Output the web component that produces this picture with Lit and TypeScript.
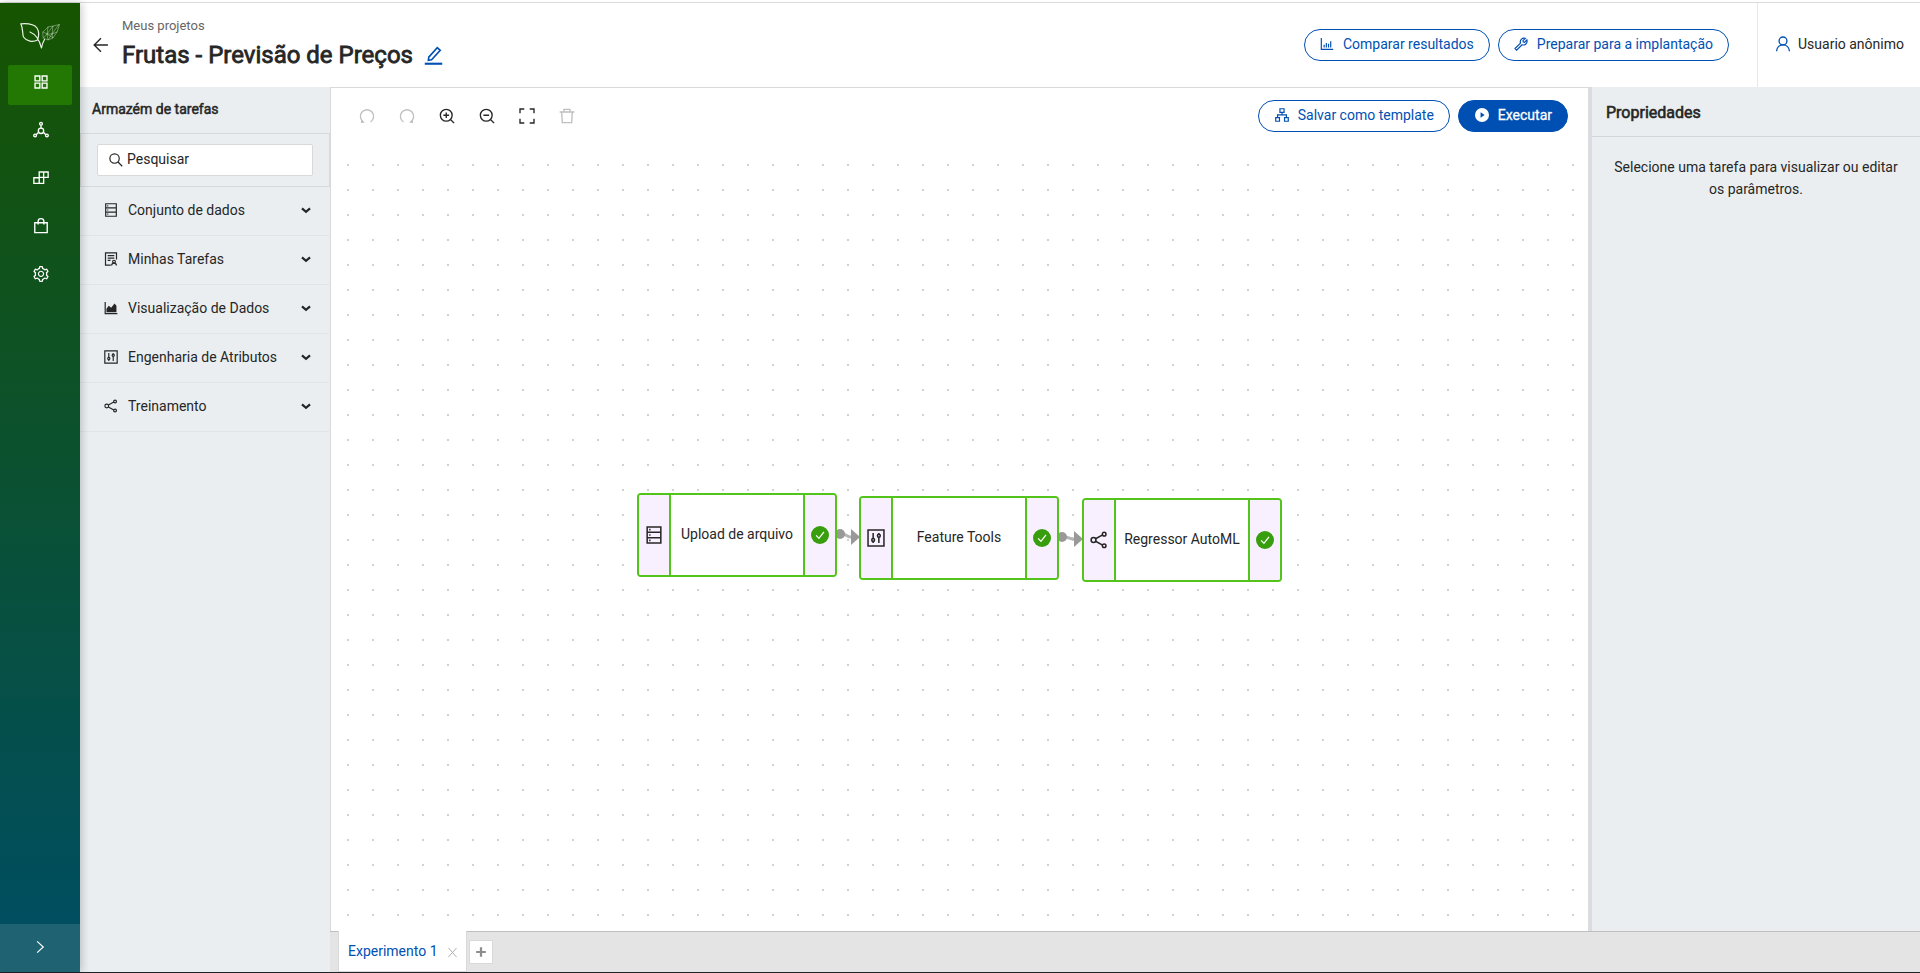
import { LitElement, html, css, svg, nothing, type TemplateResult } from "lit";
import { customElement, property, state } from "lit/decorators.js";
import { classMap } from "lit/directives/class-map.js";
import { styleMap } from "lit/directives/style-map.js";

/* Outline icons on a 1024 grid, trimmed to the 64..960 box. */
const GEAR =
  "M924.8 625.7l-65.5-56c3.1-19 4.7-38.4 4.7-57.8s-1.6-38.8-4.7-57.8l65.5-56a32.03 32.03 0 009.3-35.2l-.9-2.6a443.74 443.74 0 00-79.7-137.9l-1.8-2.1a32.12 32.12 0 00-35.1-9.5l-81.3 28.9c-30-24.6-63.5-44-99.7-57.6l-15.7-85a32.05 32.05 0 00-25.8-25.7l-2.7-.5c-52.1-9.4-106.9-9.4-159 0l-2.7.5a32.05 32.05 0 00-25.8 25.7l-15.8 85.4a351.86 351.86 0 00-99 57.4l-81.9-29.1a32 32 0 00-35.1 9.5l-1.8 2.1a446.02 446.02 0 00-79.7 137.9l-.9 2.6c-4.5 12.5-.8 26.5 9.3 35.2l66.3 56.6c-3.1 18.8-4.6 38-4.6 57.1 0 19.2 1.5 38.4 4.6 57.1L99 625.5a32.03 32.03 0 00-9.3 35.2l.9 2.6c18.1 50.4 44.9 96.9 79.7 137.9l1.8 2.1a32.12 32.12 0 0035.1 9.5l81.9-29.1c29.8 24.5 63.1 43.9 99 57.4l15.8 85.4a32.05 32.05 0 0025.8 25.7l2.7.5a449.4 449.4 0 00159 0l2.7-.5a32.05 32.05 0 0025.8-25.7l15.7-85a350 350 0 0099.7-57.6l81.3 28.9a32 32 0 0035.1-9.5l1.8-2.1c34.8-41.1 61.6-87.5 79.7-137.9l.9-2.6c4.5-12.3.8-26.3-9.3-35zM788.3 465.9c2.5 15.1 3.8 30.6 3.8 46.1s-1.3 31-3.8 46.1l-6.6 40.1 74.7 63.9a370.03 370.03 0 01-42.6 73.6L721 702.8l-31.4 25.8c-23.9 19.6-50.5 35-79.3 45.8l-38.1 14.3-17.9 97a377.5 377.5 0 01-85 0l-17.9-97.2-37.8-14.5c-28.5-10.8-55-26.2-78.7-45.7l-31.4-25.9-93.4 33.2c-17-22.9-31.2-47.6-42.6-73.6l75.5-64.5-6.5-40c-2.4-14.9-3.7-30.3-3.7-45.5 0-15.3 1.2-30.6 3.7-45.5l6.5-40-75.5-64.5c11.3-26.1 25.6-50.7 42.6-73.6l93.4 33.2 31.4-25.9c23.7-19.5 50.2-34.9 78.7-45.7l37.9-14.3 17.9-97.2c28.1-3.2 56.8-3.2 85 0l17.9 97 38.1 14.3c28.7 10.8 55.4 26.2 79.3 45.8l31.4 25.8 92.8-32.9c17 22.9 31.2 47.6 42.6 73.6L781.8 426l6.5 39.9zM512 326c-97.2 0-176 78.8-176 176s78.8 176 176 176 176-78.8 176-176-78.8-176-176-176zm79.2 255.2A111.6 111.6 0 01512 614c-29.9 0-58-11.7-79.2-32.8A111.6 111.6 0 01400 502c0-29.9 11.7-58 32.8-79.2C454 401.6 482.1 390 512 390c29.9 0 58 11.6 79.2 32.8A111.6 111.6 0 01624 502c0 29.9-11.7 58-32.8 79.2z";

const ICONS: Record<string, TemplateResult> = {
  grid: svg`<path d="M178 178h268v268H178zM578 178h268v268H578zM178 578h268v268H178zM578 578h268v268H578z"/>`,
  nodes: svg`<circle cx="512" cy="164" r="76"/><circle cx="180" cy="816" r="76"/><circle cx="844" cy="816" r="76"/><circle cx="512" cy="560" r="150"/><path d="M512 240v170M380 640L244 776M644 640l136 136"/>`,
  build: svg`<path d="M412 178h248v300H412zM660 178h252v300H660zM112 500h300v316H112zM412 478h248v338H412z"/>`,
  bag: svg`<path d="M164 330h696v550H164zM352 430V250a160 150 0 01320 0v180"/>`,
  gear: svg`<path class="solid" d=${GEAR}/>`,
  right: svg`<path d="M330 150l390 362-390 362"/>`,
  back: svg`<path d="M900 512H150M510 130L130 512l380 382"/>`,
  edit: svg`<path d="M290 590l400-450 140 130-410 440-150 30z"/><path class="thick" d="M100 900h824"/>`,
  undo: svg`<path d="M310 840A370 370 0 11714 840"/><path class="solid" d="M170 900l30-200 170 190z"/>`,
  redo: svg`<path d="M714 840A370 370 0 10310 840"/><path class="solid" d="M854 900l-30-200-170 190z"/>`,
  zoomIn: svg`<circle cx="470" cy="470" r="330"/><path d="M470 310v320M310 470h320M706 706l204 204"/>`,
  zoomOut: svg`<circle cx="470" cy="470" r="330"/><path d="M310 470h320M706 706l204 204"/>`,
  expand: svg`<path d="M120 360V120h240M664 120h240v240M904 664v240H664M360 904H120V664"/>`,
  trash: svg`<path d="M100 290h824M340 280V140h344v140M214 290l34 594h528l34-594"/>`,
  search: svg`<circle cx="420" cy="420" r="300"/><path d="M640 640l270 270"/>`,
  server: svg`<path d="M172 112h680v800H172zM172 378h680M172 646h680"/><path d="M270 245h70M270 512h70M270 780h70"/>`,
  tasks: svg`<path d="M500 900H160V124h704v420M300 300h424M300 450h424M300 600h180"/><circle cx="704" cy="680" r="90"/><path d="M550 930c20-200 290-200 310 0"/>`,
  area: svg`<path d="M140 120v748h780"/><path class="solid" d="M220 780V560l150-200 150 130 220-260 120 130v420z"/>`,
  sliders: svg`<path d="M116 116h792v792H116zM370 260v500M654 264v500"/><circle class="paper" cx="370" cy="610" r="70"/><circle class="paper" cx="654" cy="400" r="70"/>`,
  share: svg`<circle cx="240" cy="512" r="120"/><circle cx="770" cy="220" r="90"/><circle cx="770" cy="800" r="90"/><path d="M340 450l355-190M340 574l355 190"/>`,
  chart: svg`<path d="M148 130v728h760M330 740V560M470 740V440M610 740V500M750 740V330"/>`,
  wrench: svg`<path d="M130 800l350-340c-60-180 90-370 310-310L640 300l16 84 84 16 150-150c60 220-130 370-310 310L230 900z"/>`,
  tree: svg`<path d="M380 110h264v230H380zM110 680h240v230H110zM674 680h240v230H674zM512 340v150M230 680V500h564v180"/>`,
  play: svg`<circle class="solid" cx="512" cy="512" r="448"/><path class="accent" d="M420 330l260 182-260 182z"/>`,
  user: svg`<circle cx="512" cy="340" r="220"/><path d="M150 920c30-480 694-480 724 0"/>`,
  close: svg`<path d="M180 140l664 744M844 140L180 884"/>`,
  plus: svg`<path class="heavy" d="M512 80v864M80 512h864"/>`,
  check: svg`<circle class="solid" cx="512" cy="512" r="448"/><path class="light" d="M320 530l140 150 250-320"/>`,
  down: svg`<path class="heavy" d="M150 370l362 310 362-310"/>`,
};

@customElement("ui-icon")
export class UiIcon extends LitElement {
  @property() name = "";

  static styles = css`
    :host { display: inline-flex; flex: none; width: 16px; height: 16px; }
    svg { width: 100%; height: 100%; fill: none; stroke: currentColor; stroke-width: 76; overflow: visible; }
    .solid { fill: currentColor; stroke: none; }
    .paper { fill: var(--icon-paper, #eaeef1); }
    .accent { fill: #0050b3; stroke: none; }
    .light { stroke: #fff; stroke-width: 64; }
    .thick { stroke-width: 100; }
    .heavy { stroke-width: 200; }
  `;

  render() {
    return html`<svg viewBox="64 64 896 896" aria-hidden="true">${ICONS[this.name] ?? nothing}</svg>`;
  }
}

@customElement("app-sidebar")
export class AppSidebar extends LitElement {
  @state() private active = "grid";

  private items = [
    ["grid", "Projetos"],
    ["nodes", "Experimentos"],
    ["build", "Tarefas"],
    ["bag", "Implantações"],
    ["gear", "Configurações"],
  ];

  static styles = css`
    :host {
      display: flex; flex-direction: column; flex: none; width: 80px; z-index: 1;
      background: linear-gradient(#165400, #004e5f 94%);
      box-shadow: 2px 0 8px rgba(0, 0, 0, 0.2);
      color: #fff;
    }
    .logo { height: 62px; padding: 20px 20px 0; box-sizing: border-box; }
    .logo svg { display: block; width: 40px; height: 26px; fill: none; stroke: #e9f2e4; stroke-linejoin: round; stroke-linecap: round; }
    .mesh { stroke-width: 0.4; }
    .leaf { stroke-width: 1.2; }
    nav { display: flex; flex-direction: column; gap: 8px; padding: 0 8px; flex: 1; }
    button { font: inherit; color: inherit; border: 0; background: none; padding: 0; cursor: pointer; display: flex; align-items: center; justify-content: center; }
    .item { height: 40px; border-radius: 2px; padding: 0 0 6px 2px; }
    .item ui-icon { width: 16px; height: 16px; }
    .on { background: #237804; }
    .toggle { height: 48px; padding-bottom: 2px; background: rgba(255, 255, 255, 0.12); }
    .toggle ui-icon { width: 14px; height: 14px; }
  `;

  render() {
    return html`
      <div class="logo">
        <svg viewBox="0 0 40 26">
          <path class="leaf" d="M.8.8C7 .3 14 1 17 5c2.500 4 2 8 .5 12-4.500 2.500-11 1.500-14-3C2 10 3.500 6 .8.8zM10 9c5 2 9 6 11.500 16 .5-3.500 1.500-6 3-8.500"/>
          <path class="mesh" d="M23 9l5-5 5-1 6.500-1.500L37 9l-4 6-5 2-4.500-2zM28 4l-1 7 6-8-1 8 7-9.500M23 9l4 2 5 0 5-2M27 11l-3.500 4M32 11l1 4-6-4 1 6 4-6"/>
        </svg>
      </div>
      <nav>
        ${this.items.map(
          ([icon, label]) => html`<button
            class=${classMap({ item: true, on: this.active === icon })}
            aria-label=${label}
            @click=${() => (this.active = icon)}
          ><ui-icon name=${icon}></ui-icon></button>`
        )}
      </nav>
      <button class="toggle" aria-label="Expandir menu"><ui-icon name="right"></ui-icon></button>
    `;
  }
}

@customElement("app-header")
export class AppHeader extends LitElement {
  static styles = css`
    :host { display: flex; flex: none; height: 84px; background: #fff; }
    button { font: inherit; cursor: pointer; }
    .plain { border: 0; background: none; padding: 0; display: flex; color: inherit; }
    .back { align-self: flex-start; padding: 34px 0 0 13px; }
    .titles { flex: 1; padding: 13px 0 0 13px; min-width: 0; }
    a { display: block; font-size: 13px; line-height: 20px; color: #666; text-decoration: none; }
    .row { display: flex; align-items: center; gap: 11px; }
    h1 { margin: 0; font-size: 24px; line-height: 38px; font-weight: 400; -webkit-text-stroke: 0.8px currentColor; white-space: nowrap; }
    .edit { color: #0050b3; }
    .edit ui-icon { width: 19px; height: 19px; }
    .actions { display: flex; gap: 8px; padding: 26px 28px 0 0; align-items: flex-start; }
    .pill {
      display: flex; align-items: center; gap: 9px; height: 32px; box-sizing: border-box; padding: 0 15px 2px;
      border: 1px solid #0050b3; border-radius: 16px; background: #fff; color: #0050b3; white-space: nowrap;
    }
    .pill ui-icon { width: 14px; height: 14px; }
    .user { display: flex; align-items: center; gap: 7px; border-left: 1px solid #e8e8e8; padding: 0 16px 3px 17px; white-space: nowrap; }
    .user ui-icon { color: #0050b3; }
  `;

  render() {
    return html`
      <button class="plain back" aria-label="Voltar"><ui-icon name="back"></ui-icon></button>
      <div class="titles">
        <a href="#projetos">Meus projetos</a>
        <div class="row">
          <h1>Frutas - Previsão de Preços</h1>
          <button class="plain edit" aria-label="Editar nome"><ui-icon name="edit"></ui-icon></button>
        </div>
      </div>
      <div class="actions">
        <button class="pill"><ui-icon name="chart"></ui-icon>Comparar resultados</button>
        <button class="pill"><ui-icon name="wrench"></ui-icon>Preparar para a implantação</button>
      </div>
      <div class="user"><ui-icon name="user"></ui-icon><span>Usuario anônimo</span></div>
    `;
  }
}

@customElement("task-store")
export class TaskStore extends LitElement {
  private groups = [
    ["server", "Conjunto de dados"],
    ["tasks", "Minhas Tarefas"],
    ["area", "Visualização de Dados"],
    ["sliders", "Engenharia de Atributos"],
    ["share", "Treinamento"],
  ];

  static styles = css`
    :host { display: flex; flex-direction: column; flex: none; width: 250px; background: #eaeef1; }
    h2 { margin: 0; height: 46px; line-height: 44px; padding-left: 12px; font-size: 14px; font-weight: 400; -webkit-text-stroke: 0.5px currentColor; }
    .search { border: 1px solid #d9d9d9; padding: 10px 16px; }
    .field { display: flex; align-items: center; gap: 4px; height: 32px; box-sizing: border-box; padding: 0 11px; background: #fff; border: 1px solid #d9d9d9; border-radius: 2px; }
    .field label { display: flex; }
    .field ui-icon { width: 14px; height: 14px; }
    input { flex: 1; min-width: 0; border: 0; outline: 0; padding: 0 0 2px; font: inherit; color: inherit; background: none; }
    input::placeholder { color: #262626; opacity: 1; }
    ul { list-style: none; margin: 0; padding: 0 1px 0 0; }
    li { border-bottom: 1px solid #e2e5e8; }
    button { display: flex; align-items: center; gap: 10px; width: 100%; height: 48px; border: 0; background: none; padding: 0 18px 2px 24px; font: inherit; color: inherit; text-align: left; cursor: pointer; }
    span { flex: 1; }
    button ui-icon { width: 14px; height: 14px; }
    button .chevron { width: 10px; height: 10px; }
  `;

  render() {
    return html`
      <h2>Armazém de tarefas</h2>
      <div class="search">
        <div class="field">
          <label for="q" aria-label="Pesquisar"><ui-icon name="search"></ui-icon></label>
          <input id="q" type="text" placeholder="Pesquisar" />
        </div>
      </div>
      <ul>
        ${this.groups.map(
          ([icon, label]) => html`<li>
            <button><ui-icon name=${icon}></ui-icon><span>${label}</span><ui-icon class="chevron" name="down"></ui-icon></button>
          </li>`
        )}
      </ul>
    `;
  }
}

interface FlowNode { label: string; icon: string; x: number; y: number; }

const NODE_W = 200;
const NODE_H = 84;

@customElement("flow-canvas")
export class FlowCanvas extends LitElement {
  private nodes: FlowNode[] = [
    { label: "Upload de arquivo", icon: "server", x: 306, y: 349 },
    { label: "Feature Tools", icon: "sliders", x: 528, y: 352 },
    { label: "Regressor AutoML", icon: "share", x: 751, y: 354 },
  ];

  private tools: [string, string, boolean][] = [
    ["undo", "Desfazer", true],
    ["redo", "Refazer", true],
    ["zoomIn", "Aumentar zoom", false],
    ["zoomOut", "Diminuir zoom", false],
    ["expand", "Ajustar à tela", false],
    ["trash", "Excluir", true],
  ];

  static styles = css`
    :host { display: flex; flex-direction: column; flex: 1; min-width: 0; background: #fff; border: solid #d9d9d9; border-width: 1px 0 0 1px; }
    button { font: inherit; cursor: pointer; }
    .bar { display: flex; align-items: center; gap: 8px; height: 56px; padding: 0 20px 0 16px; }
    .tools { display: flex; flex: 1; }
    .tool { width: 40px; height: 40px; border: 0; background: none; padding: 0; display: flex; align-items: center; justify-content: center; color: #262626; }
    .tool:disabled { color: #bfbfbf; }
    .pill {
      display: flex; align-items: center; gap: 9px; height: 32px; box-sizing: border-box; padding: 0 15px 2px 16px;
      border: 1px solid #0050b3; border-radius: 16px; background: #fff; color: #0050b3; white-space: nowrap;
    }
    .pill ui-icon { width: 14px; height: 14px; }
    .run { background: #0050b3; color: #fff; -webkit-text-stroke: 0.3px currentColor; }
    .stage { position: relative; flex: 1; overflow: hidden; }
    .layer { position: absolute; inset: 0; width: 100%; height: 100%; display: block; }
    .dot { fill: #d2d2d2; }
    .wire { fill: none; stroke: #b5b5b5; stroke-width: 3; }
    .port { fill: #999; }
    .node { position: absolute; display: flex; box-sizing: border-box; border: 2px solid #52c41a; border-radius: 4px; background: #fff; overflow: hidden; }
    .cap { flex: none; width: 30px; display: flex; align-items: center; justify-content: center; background: #f9f0ff; --icon-paper: #f9f0ff; }
    .first { border-right: 2px solid #52c41a; }
    .last { border-left: 2px solid #52c41a; color: #389e0d; }
    .cap ui-icon { width: 18px; height: 18px; }
    .label { flex: 1; display: flex; align-items: center; justify-content: center; white-space: nowrap; padding-bottom: 2px; }
  `;

  private wire(a: FlowNode, b: FlowNode) {
    const x1 = a.x + NODE_W + 3, y1 = a.y + NODE_H / 2 - 1;
    const x2 = b.x, y2 = b.y + NODE_H / 2 - 1;
    const mid = (x1 + x2 - 9) / 2;
    return svg`
      <path class="wire" d=${`M${x1} ${y1}C${mid + 4} ${y1} ${mid} ${y2} ${x2 - 8} ${y2}`}/>
      <circle class="port" cx=${x1} cy=${y1} r="5"/>
      <path class="port" d=${`M${x2 - 8} ${y2 - 8}l9 8-9 8z`}/>`;
  }

  render() {
    return html`
      <div class="bar">
        <div class="tools">
          ${this.tools.map(
            ([icon, label, off]) => html`<button class="tool" aria-label=${label} ?disabled=${off}><ui-icon name=${icon}></ui-icon></button>`
          )}
        </div>
        <button class="pill"><ui-icon name="tree"></ui-icon>Salvar como template</button>
        <button class="pill run"><ui-icon name="play"></ui-icon>Executar</button>
      </div>
      <div class="stage">
        <svg class="layer">
          <defs>
            <pattern id="dots" width="25" height="25" patternUnits="userSpaceOnUse">
              <rect class="dot" x="16" y="20" width="2" height="2"/>
            </pattern>
          </defs>
          <rect width="100%" height="100%" fill="url(#dots)"/>
          ${this.nodes.slice(1).map((n, i) => this.wire(this.nodes[i], n))}
        </svg>
        ${this.nodes.map(
          (n) => html`<div class="node" style=${styleMap({ left: `${n.x}px`, top: `${n.y}px`, width: `${NODE_W}px`, height: `${NODE_H}px` })}>
            <div class="cap first"><ui-icon name=${n.icon}></ui-icon></div>
            <div class="label">${n.label}</div>
            <div class="cap last"><ui-icon name="check"></ui-icon></div>
          </div>`
        )}
      </div>
    `;
  }
}

@customElement("properties-panel")
export class PropertiesPanel extends LitElement {
  static styles = css`
    :host { display: block; flex: none; width: 328px; background: #eaeef1; border-left: 4px solid #dadcdf; }
    h2 { margin: 0; height: 49px; line-height: 52px; padding-left: 14px; font-size: 16px; font-weight: 400; -webkit-text-stroke: 0.6px currentColor; border-bottom: 1px solid #d3d7db; }
    p { margin: 0; padding: 19px 20px; line-height: 22px; text-align: center; }
  `;

  render() {
    return html`
      <h2>Propriedades</h2>
      <p>Selecione uma tarefa para visualizar ou editar os parâmetros.</p>
    `;
  }
}

@customElement("experiment-tabs")
export class ExperimentTabs extends LitElement {
  static styles = css`
    :host { display: flex; flex: none; height: 41px; padding-left: 8px; background: #e4e4e4; box-shadow: inset 0 1px #bfbfbf; }
    button { font: inherit; border: 0; background: none; padding: 0; cursor: pointer; display: flex; align-items: center; justify-content: center; }
    .tab { display: flex; align-items: center; gap: 9px; padding: 0 8px 0 9px; background: #fff; border: solid #d9d9d9; border-width: 0 1px 1px; }
    .name { color: #0050b3; }
    .close { color: #aaa; padding-top: 2px; }
    .close ui-icon { width: 11px; height: 11px; }
    .add { width: 24px; height: 24px; box-sizing: border-box; margin: 9px 0 0 2px; background: #fff; border: 1px solid #d9d9d9; color: #8c8c8c; }
    .add ui-icon { width: 10px; height: 10px; }
  `;

  render() {
    return html`
      <div class="tab">
        <button class="name">Experimento 1</button>
        <button class="close" aria-label="Fechar experimento"><ui-icon name="close"></ui-icon></button>
      </div>
      <button class="add" aria-label="Novo experimento"><ui-icon name="plus"></ui-icon></button>
    `;
  }
}

@customElement("app-root")
export class AppRoot extends LitElement {
  static styles = css`
    :host {
      display: flex; flex-direction: column; box-sizing: border-box; min-height: 100vh; padding-top: 2px;
      border-bottom: 1px solid #1c2426; background: #fff;
      font-family: Roboto, "Liberation Sans", sans-serif; font-size: 14px; line-height: 22px; color: #262626;
    }
    .shell { display: flex; flex: 1; border-top: 1px solid #dadada; }
    .page { display: flex; flex-direction: column; flex: 1; min-width: 0; }
    .body { display: flex; flex: 1; min-height: 0; }
    .work { display: flex; flex-direction: column; flex: 1; min-width: 0; }
    .editor { display: flex; flex: 1; min-height: 0; }
  `;

  render() {
    return html`
      <div class="shell">
        <app-sidebar></app-sidebar>
        <div class="page">
          <app-header></app-header>
          <div class="body">
            <task-store></task-store>
            <div class="work">
              <div class="editor">
                <flow-canvas></flow-canvas>
                <properties-panel></properties-panel>
              </div>
              <experiment-tabs></experiment-tabs>
            </div>
          </div>
        </div>
      </div>
    `;
  }
}
